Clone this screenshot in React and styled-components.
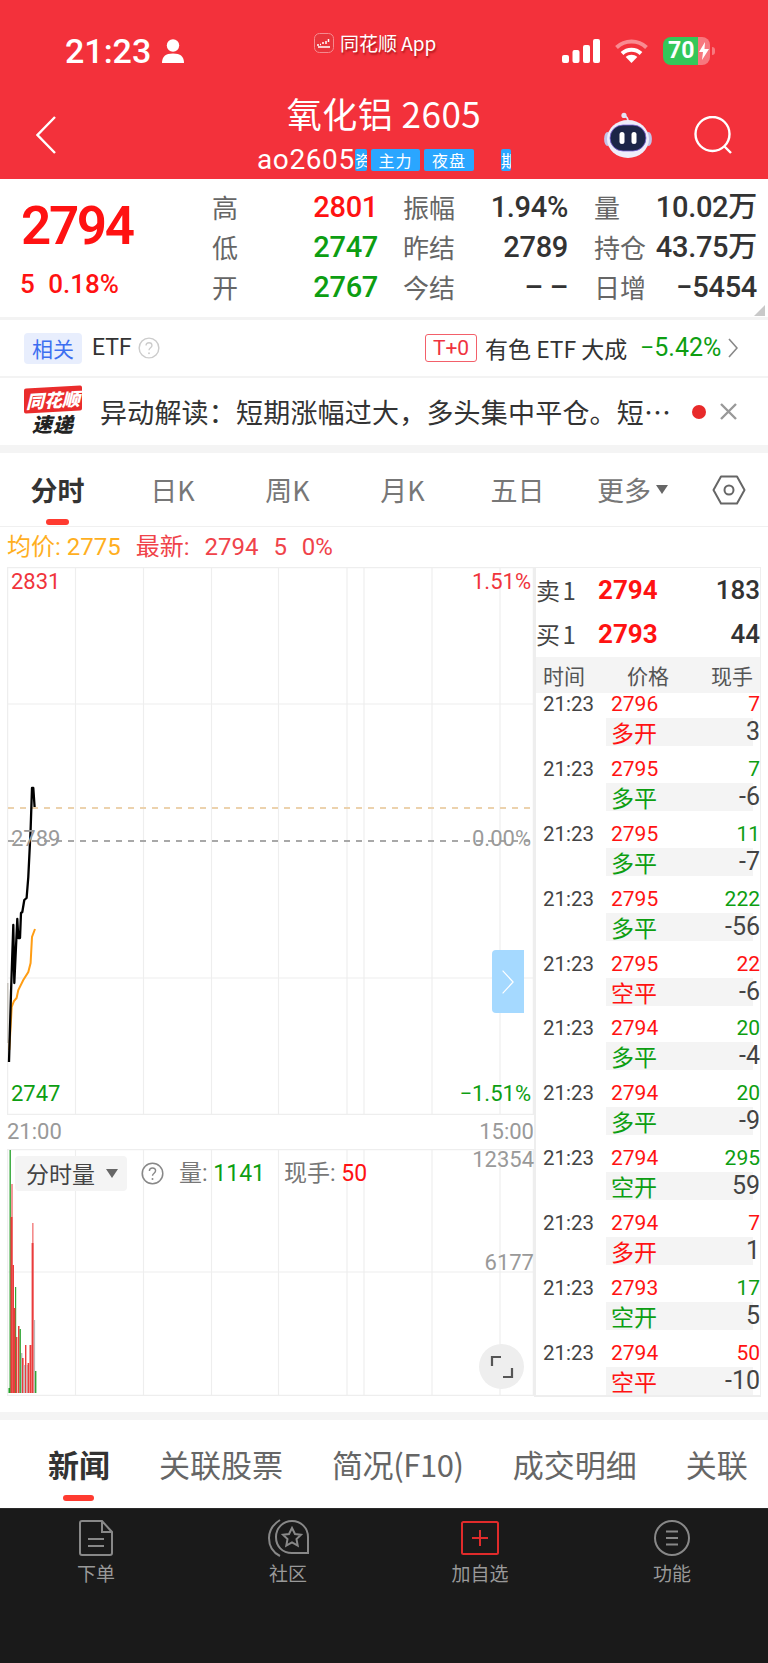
import React from "react";
import styled, { createGlobalStyle } from "styled-components";

const Global = createGlobalStyle`
  html, body { margin: 0; padding: 0; background: #fff; }
  body { font-family: Roboto, "Noto Sans CJK SC", sans-serif; color: #333; }
  #root { width: 768px; height: 1663px; overflow: hidden; }
  * { box-sizing: border-box; }
`;

const RED = "#ff1212";
const GREEN = "#0d9e12";
const palette = { red: RED, green: GREEN, dark: "#333", grey: "#666" };

const Page = styled.div`width: 768px; height: 1663px; display: flex; flex-direction: column; overflow: hidden; background: #fff;`;
const Header = styled.header`background: #f3313b; color: #fff; height: 179px; flex: none;`;
const StatusBar = styled.div`height: 90px; display: grid; grid-template-columns: 314px 248px 1fr; padding-top: 32px;`;
const StatusLeft = styled.div`display: flex; align-items: center; height: 38px; padding-left: 65px; gap: 11px; font: 500 34px/38px Roboto, sans-serif;`;
const AppLabel = styled.div`display: flex; align-items: center; gap: 6px; height: 22px; font: 400 19px/22px "Noto Sans CJK SC", sans-serif; text-shadow: 1px 2px 2px rgba(110,0,0,.55);`;
const StatusRight = styled.div`display: flex; align-items: center; height: 38px; gap: 15px;`;
const Battery = styled.div`position: relative; display: flex; width: 47px; height: 28px; margin-right: 3px; font: 700 23px/28px Roboto, sans-serif;
  &::after { content: ""; position: absolute; right: -5px; top: 10px; width: 3px; height: 8px; border-radius: 0 3px 3px 0; background: rgba(255,255,255,.35); }`;
const BatteryFill = styled.div`width: 35px; background: #34c759; padding-left: 5px; border-radius: 8px 0 0 8px;`;
const BatteryBolt = styled.div`width: 12px; display: flex; align-items: center; justify-content: center; background: rgba(255,255,255,.35); border-radius: 0 8px 8px 0;`;

const NavBar = styled.div`height: 89px; display: grid; grid-template-columns: 200px 1fr 200px; align-items: center;`;
const NavSide = styled.div`display: flex; align-items: center; justify-content: ${p => p.$end ? "flex-end" : "flex-start"}; padding: ${p => p.$end ? "0 35px 0 0" : "0 0 0 36px"}; gap: 42px;`;
const NavCenter = styled.div`display: flex; flex-direction: column; align-items: center; padding-top: 1px;`;
const Title = styled.div`font: 400 35px/38px "Noto Sans CJK SC", sans-serif; height: 38px; margin-bottom: 17px; margin-top: -6px; letter-spacing: .5px;`;
const Ticker = styled.div`display: flex; align-items: center; height: 22px;`;
const TickerCode = styled.span`font: 400 28px/22px Roboto, sans-serif; width: 98px; letter-spacing: .6px;`;
const Chip = styled.span`display: block; height: 22px; width: ${p => p.$w}px; margin-left: ${p => p.$gap || 0}px; border-radius: 2px; background: #2aa6ff; white-space: nowrap; overflow: ${p => p.$w > 20 ? "visible" : "hidden"}; text-align: ${p => p.$w > 20 ? "center" : "left"}; letter-spacing: ${p => p.$w > 20 ? 1 : 0}px; font: 400 16px/22px "Noto Sans CJK SC", sans-serif;`;

const Quote = styled.section`height: 138px; flex: none; display: flex;`;
const PriceCol = styled.div`width: 212px; padding: 15px 0 0 21px; flex: none;`;
const BigPrice = styled.div`color: ${RED}; font: 600 53px/64px Roboto, sans-serif; letter-spacing: -2.4px;`;
const Change = styled.div`color: ${RED}; font: 500 26px/30px Roboto, sans-serif; margin: 11px 0 0 -1px; word-spacing: 7px;`;
const StatGrid = styled.div`display: grid; grid-template-columns: 86px 80px 102px 88px 82px 107px; grid-auto-rows: 40px; padding-top: 8px; align-items: center;`;
const StatLabel = styled.div`color: #666; font: 400 26px/40px "Noto Sans CJK SC", sans-serif; padding-left: ${p => p.$pad || 0}px; white-space: nowrap;`;
const StatValue = styled.div`color: ${p => palette[p.$c || "dark"]}; font: 500 29px/40px Roboto, "Noto Sans CJK SC", sans-serif; text-align: right; white-space: nowrap; letter-spacing: -.3px;`;
const Corner = styled.div`position: absolute; left: 754px; top: 305px; width: 0; height: 0; border-left: 11px solid transparent; border-bottom: 11px solid #c9c9c9;`;

const EtfRow = styled.section`height: 59px; flex: none; border-top: 3px solid #f3f3f3; display: flex; align-items: center; padding-left: 24px; font: 400 23px/28px "Noto Sans CJK SC", Roboto, sans-serif; color: #333;`;
const RelBadge = styled.span`width: 58px; height: 31px; background: #e8eefd; color: #3d6ff0; border-radius: 4px; text-align: center; font: 400 21px/31px "Noto Sans CJK SC", sans-serif;`;
const EtfName = styled.span`margin: 0 6px 0 10px; font: 400 23px/28px Roboto, sans-serif;`;
const Spacer = styled.div`flex: 1;`;
const TBadge = styled.span`width: 52px; height: 28px; border: 1px solid #f3606a; border-radius: 3px; color: #ef3340; text-align: center; font: 400 21px/26px Roboto, sans-serif; margin-right: 8px;`;
const EtfTitle = styled.span`font: 400 23px/28px "Noto Sans CJK SC", Roboto, sans-serif; width: 155px; white-space: nowrap;`;
const EtfPct = styled.span`color: ${GREEN}; font: 400 25px/28px Roboto, sans-serif; width: 80px; white-space: nowrap;`;
const EtfArrow = styled.svg`margin: 0 30px 0 8px;`;

const NewsRow = styled.section`height: 69px; flex: none; border-top: 2px solid #f3f3f3; display: flex; align-items: center; padding-left: 24px;`;
const NewsLogo = styled.div`width: 58px; flex: none; display: flex; flex-direction: column; align-items: center;`;
const NewsTag = styled.div`width: 58px; height: 25px; background: #ea2c2c; border-radius: 2px; color: #fff; text-align: center; transform: skewY(-3deg); font: italic 800 18px/25px "Noto Sans CJK SC", sans-serif;`;
const NewsBrand = styled.div`color: #222; font: italic 800 20px/24px "Noto Sans CJK SC", sans-serif; letter-spacing: 1px; white-space: nowrap;`;
const NewsText = styled.div`margin-left: 18px; width: 572px; flex: none; font: 400 27px/34px "Noto Sans CJK SC", sans-serif; letter-spacing: .2px; color: #333; white-space: nowrap;`;
const NewsDot = styled.span`width: 14px; height: 14px; border-radius: 50%; background: #e82a2a; margin-left: 20px; flex: none;`;
const NewsClose = styled.svg`margin-left: 14px;`;

const GreyBand = styled.div`height: ${p => p.$h}px; margin-top: ${p => p.$top || 0}px; background: #f4f4f4; flex: none;`;
const Tabs = styled.nav`height: 74px; flex: none; display: grid; grid-template-columns: repeat(6, 115px) 1fr; border-bottom: 1px solid #f0f0f0; align-items: center; justify-items: center;`;
const PeriodTab = styled.div`position: relative; font: ${p => p.$on ? 700 : 400} 27px/36px "Noto Sans CJK SC", Roboto, sans-serif; color: ${p => p.$on ? "#333" : "#777"}; white-space: nowrap; display: flex; align-items: center; gap: 5px;
  ${p => p.$on && `&::after { content: ""; position: absolute; left: 15px; top: 47px; width: 23px; height: 6px; border-radius: 3px; background: #ff3b30; }`}`;
const Caret = styled.span`width: 0; height: 0; border-left: 6.5px solid transparent; border-right: 6.5px solid transparent; border-top: 9px solid #666;`;

const Legend = styled.div`height: 40px; flex: none; padding: 0 0 0 7px; display: flex; align-items: center; gap: 15px; font: 400 24px/40px Roboto, "Noto Sans CJK SC", sans-serif; color: #f0434a; word-spacing: 9px;`;
const LegendAvg = styled.span`color: #ffaf1f; word-spacing: 0;`;

const Market = styled.section`flex: none; display: flex; padding: 0 7px; height: 830px;`;
const ChartCol = styled.div`width: 527px; flex: none;`;
const Plot = styled.div`position: relative; height: ${p => p.$h}px;`;
const PlotSvg = styled.svg`display: block;`;
const PlotLabel = styled.span`position: absolute; font: 400 ${p => p.$s || 22}px/26px Roboto, sans-serif; color: ${p => p.$c}; white-space: nowrap; ${p => p.$right !== undefined ? `right: ${p.$right}px;` : `left: ${p.$left}px;`} top: ${p => p.$top}px;`;
const Handle = styled.div`position: absolute; left: 485px; top: 383px; width: 32px; height: 63px; background: #a5d9ff; border-radius: 4px 0 0 4px; display: flex; align-items: center; justify-content: center;`;
const TimeAxis = styled.div`height: 34px; display: flex; justify-content: space-between; align-items: center; color: #999; font: 400 22px/34px Roboto, sans-serif;`;
const VolTools = styled.div`position: absolute; left: 8px; top: 7px; display: flex; align-items: center;`;
const VolSelect = styled.div`width: 112px; height: 35px; margin-right: 14px; background: #f4f4f4; border-radius: 4px; display: flex; align-items: center; gap: 11px; padding-left: 11px; font: 400 23px/35px "Noto Sans CJK SC", sans-serif; color: #444;`;
const VolInfo = styled.span`margin-left: ${p => p.$gap}px; color: #777; font: 400 23px/35px Roboto, "Noto Sans CJK SC", sans-serif; white-space: nowrap;`;
const VolNum = styled.span`color: ${p => palette[p.$c]};`;
const ExpandBtn = styled.div`position: absolute; left: 472px; top: 195px; width: 45px; height: 45px; border-radius: 50%; background: #eee; display: flex; align-items: center; justify-content: center;`;

const SidePanel = styled.aside`width: 227px; flex: none; border: 1px solid #eee; border-bottom-width: 2px; border-left-width: 2px; height: 830px;`;
const BookRow = styled.div`height: 44px; display: grid; grid-template-columns: 62px 1fr auto; align-items: center;`;
const BookLabel = styled.span`font: 400 24px/44px "Noto Sans CJK SC", Roboto, sans-serif; word-spacing: -3px; color: #444; white-space: nowrap;`;
const BookPrice = styled.span`font: 700 26px/44px Roboto, sans-serif; color: ${RED};`;
const BookQty = styled.span`font: 500 26px/44px Roboto, sans-serif; color: #333;`;
const TradeHead = styled.div`height: 36px; margin-top: 1px; background: #f4f4f4; display: grid; grid-template-columns: 84px 84px 1fr; padding-left: 7px; font: 400 21px/36px "Noto Sans CJK SC", sans-serif; color: #555;`;
const Trade = styled.div`height: ${p => p.$last ? 53 : 64.9}px; display: grid; grid-template-columns: 70px 1fr;`;
const TradeTime = styled.span`padding-left: 7px; font: 400 20.5px/22px Roboto, sans-serif; color: #444;`;
const TradeLine = styled.div`height: 25px; display: flex; justify-content: space-between; padding-left: 5px; font: 400 21px/22px Roboto, sans-serif;`;
const TradeNum = styled.span`color: ${p => palette[p.$c]};`;
const TradeSub = styled.div`height: 28px; margin-right: 7px; background: #f4f4f4; display: flex; justify-content: space-between; padding-left: 5px;`;
const TradeKind = styled.span`color: ${p => palette[p.$c]}; font: 400 23px/28px "Noto Sans CJK SC", sans-serif;`;
const TradeDelta = styled.span`margin-right: -7px; color: #444; font: 400 25px/28px Roboto, sans-serif;`;

const NewsTabs = styled.nav`height: 88px; flex: none; display: flex; gap: 49px; padding: 25px 0 0 48px; white-space: nowrap; overflow: hidden;`;
const NewsTab = styled.div`position: relative; flex: none; font: ${p => p.$on ? 700 : 400} 31px/38px "Noto Sans CJK SC", Roboto, sans-serif; color: ${p => p.$on ? "#333" : "#666"}; letter-spacing: ${p => p.$tight ? "-.4px" : "0"};
  ${p => p.$on && `&::after { content: ""; position: absolute; left: 15px; top: 50px; width: 31px; height: 6px; border-radius: 3px; background: #ff3b30; }`}`;
const BottomBar = styled.footer`flex: 1; background: #1a1a1a; border-top: 1px solid #2a2a2a; display: grid; grid-template-columns: repeat(4, 192px); padding-top: 8px; align-content: start; justify-items: center;`;
const BarItem = styled.div`display: flex; flex-direction: column; align-items: center; height: 70px; color: #999; font: 400 19px/24px "Noto Sans CJK SC", sans-serif;`;
const BarIcon = styled.div`height: 42px; margin-bottom: 2px; display: flex; align-items: center;`;

const Chevron = ({ w = 20, h = 38, color = "#fff", sw = 2.4, dir = "left" }) => (
  <svg width={w} height={h} viewBox="0 0 20 38" fill="none" preserveAspectRatio="none">
    <path d={dir === "left" ? "M19 1 L1.5 19 L19 37" : "M1 1 L18.5 19 L1 37"} stroke={color} strokeWidth={sw} />
  </svg>
);

const Help = ({ size = 23, c = "#aaa" }) => (
  <svg width={size} height={size} viewBox="0 0 23 23" fill="none">
    <circle cx="11.5" cy="11.5" r="10.3" stroke={c} strokeWidth="1.5" />
    <path d="M8.4 9c0-1.9 1.4-3 3.1-3s3.1 1.1 3.1 2.8c0 2.3-3.1 2.5-3.1 5" stroke={c} strokeWidth="1.4" />
    <circle cx="11.5" cy="17" r="1" fill={c} />
  </svg>
);

const AppLogo = () => (
  <svg width="20" height="20" viewBox="0 0 20 20">
    <rect x=".5" y=".5" width="19" height="19" rx="5" fill="#e8343c" stroke="#f58a8f" />
    <path d="M3 12h2M6 11.5h1M9 9v2M12 8v3M14.5 6v3M4 14h12" stroke="#fff" strokeWidth="1.5" />
  </svg>
);

const Robot = () => (
  <svg width="48" height="46" viewBox="0 0 48 46">
    <path d="M24 9c0-2-1-4-3-5" stroke="#e4e2f4" strokeWidth="1.6" fill="none" />
    <circle cx="20" cy="3.4" r="2.6" fill="#e4e2f4" />
    <ellipse cx="3.5" cy="27" rx="3.4" ry="7" fill="#c3c2e8" />
    <ellipse cx="44.5" cy="27" rx="3.4" ry="7" fill="#c3c2e8" />
    <ellipse cx="24" cy="27" rx="21" ry="19" fill="#eeedfa" />
    <rect x="6" y="13" width="36" height="26" rx="13" fill="#1c2547" stroke="#7f64d8" strokeWidth=".8" />
    <rect x="15.5" y="20" width="5" height="12" rx="2.5" fill="#fff" />
    <rect x="27.5" y="20" width="5" height="12" rx="2.5" fill="#fff" />
  </svg>
);

const Search = () => (
  <svg width="39" height="38" viewBox="0 0 39 38" fill="none">
    <circle cx="18.5" cy="18" r="17" stroke="#fff" strokeWidth="2.4" />
    <path d="M30 30l7 7" stroke="#fff" strokeWidth="2.4" />
  </svg>
);

const VGRID = [75.5, 143.5, 211.5, 278.5, 347, 364, 432, 500];

const PriceSvg = () => (
  <PlotSvg width="527" height="548" viewBox="7 567 527 548">
    <rect x="7.5" y="567.5" width="526" height="547" fill="none" stroke="#eee" strokeWidth="1.5" />
    {VGRID.map(x => <line key={x} x1={x} x2={x} y1="567" y2="1115" stroke="#eee" strokeWidth="1.2" />)}
    <line x1="7" x2="534" y1="704" y2="704" stroke="#eee" strokeWidth="1.2" />
    <line x1="7" x2="534" y1="978" y2="978" stroke="#eee" strokeWidth="1.2" />
    <line x1="8" x2="534" y1="808" y2="808" stroke="#ecd2ad" strokeWidth="1.8" strokeDasharray="6 6" />
    <line x1="8" x2="534" y1="841" y2="841" stroke="#a8a8a8" strokeWidth="1.8" strokeDasharray="6 6" />
    <rect x="6.5" y="983" width="2" height="60" fill="#c9c6c0" />
    <polyline fill="none" stroke="#ff9d14" strokeWidth="2" points="9.3,1050 11.7,1007 14,1001 16.6,998 18.3,990 23.3,980 28.3,972 30.6,963 32,937 35,929" />
    <polyline fill="none" stroke="#000" strokeWidth="2.3" strokeLinejoin="round" points="9,1062 11,993 13.3,925 14.3,983 17.3,919 18.3,938 20,938 21,913 22.3,912 24.3,900 26.6,898 28.3,877 30.6,830 32,788 33.3,788 34.6,807" />
  </PlotSvg>
);

const BARS = [
  [8.5, 1.5, 1388, "#159f1c"], [11, 2, 1184, "#f49a9a"], [9.5, 1.4, 1150, "#2fa634"], [10.5, 2, 1217, "#ea3c3c"],
  [12.5, 1.5, 1265, "#ea3c3c"], [15, 1.2, 1287, "#2fa634"], [13.8, 1.6, 1308, "#ea3c3c"], [16, 1.4, 1337, "#ea3c3c"],
  [18, 1.5, 1326, "#ea3c3c"], [19.5, 1.4, 1329, "#2fa634"], [21, 1.4, 1353, "#b9b9b9"], [22, 1.6, 1358, "#ea3c3c"],
  [23.5, 1.4, 1365, "#b9b9b9"], [25, 1.4, 1345, "#ea3c3c"], [26.5, 1.3, 1365, "#b9b9b9"], [27.6, 1.6, 1363, "#ea3c3c"],
  [29.5, 2, 1345, "#ea3c3c"], [32, 1.6, 1223, "#f48c8c"], [31.6, 1.9, 1243, "#ea3c3c"], [33.8, 1.3, 1320, "#bbb"], [35, 1.4, 1371, "#2fa634"],
];

const VolumeSvg = () => (
  <PlotSvg width="527" height="247" viewBox="7 1149 527 247">
    <rect x="7.5" y="1149.5" width="526" height="246" fill="none" stroke="#eee" strokeWidth="1.5" />
    {VGRID.map(x => <line key={x} x1={x} x2={x} y1="1149" y2="1396" stroke="#eee" strokeWidth="1.2" />)}
    <line x1="7" x2="534" y1="1272" y2="1272" stroke="#eee" strokeWidth="1.2" />
    {BARS.map(([x, w, top, c], i) => <rect key={i} x={x} y={top} width={w} height={1393 - top} fill={c} />)}
  </PlotSvg>
);

const TRADES = [
  ["2796", "7", "red", "多开", "red", "3"], ["2795", "7", "green", "多平", "green", "-6"],
  ["2795", "11", "green", "多平", "green", "-7"], ["2795", "222", "green", "多平", "green", "-56"],
  ["2795", "22", "red", "空平", "red", "-6"], ["2794", "20", "green", "多平", "green", "-4"],
  ["2794", "20", "green", "多平", "green", "-9"], ["2794", "295", "green", "空开", "green", "59"],
  ["2794", "7", "red", "多开", "red", "1"], ["2793", "17", "green", "空开", "green", "5"],
  ["2794", "50", "red", "空平", "red", "-10"],
];

export default function App() {
  return (
    <Page>
      <Global />
      <Header>
        <StatusBar>
          <StatusLeft>
            <span>21:23</span>
            <svg width="22" height="24" viewBox="0 0 22 24" fill="#fff">
              <circle cx="11" cy="6.5" r="6.2" />
              <path d="M0 24c0-6.5 3.5-9.5 11-9.5S22 17.5 22 24z" />
            </svg>
          </StatusLeft>
          <AppLabel><AppLogo /><span>同花顺 App</span></AppLabel>
          <StatusRight>
            <svg width="38" height="24" viewBox="0 0 38 24" fill="#fff">
              <rect x="0" y="16" width="7" height="8" rx="2" />
              <rect x="10.5" y="11" width="7" height="13" rx="2" />
              <rect x="21" y="6" width="7" height="18" rx="2" />
              <rect x="31" y="0" width="7" height="24" rx="2" />
            </svg>
            <svg width="33" height="24" viewBox="0 0 33 24" fill="none">
              <path d="M1.5 8.5C10 .5 23 .5 31.5 8.5" stroke="#f98b91" strokeWidth="4" />
              <path d="M7 14.5c5.5-5 13.5-5 19 0" stroke="#fff" strokeWidth="4" />
              <path d="M16.5 24l-5.8-6c3.3-3 8.3-3 11.6 0z" fill="#fff" />
            </svg>
            <Battery>
              <BatteryFill>70</BatteryFill>
              <BatteryBolt>
                <svg width="10" height="18" viewBox="0 0 10 18" fill="#fff"><path d="M6 0L0 10h4l-1 8 7-11H5.5z" /></svg>
              </BatteryBolt>
            </Battery>
          </StatusRight>
        </StatusBar>
        <NavBar>
          <NavSide><Chevron /></NavSide>
          <NavCenter>
            <Title>氧化铝 2605</Title>
            <Ticker>
              <TickerCode>ao2605</TickerCode>
              <Chip $w={12}> 资</Chip>
              <Chip $w={49} $gap={4}>主力</Chip>
              <Chip $w={50} $gap={4}>夜盘</Chip>
              <Chip $w={10} $gap={27}>期</Chip>
            </Ticker>
          </NavCenter>
          <NavSide $end><Robot /><Search /></NavSide>
        </NavBar>
      </Header>

      <Quote>
        <PriceCol>
          <BigPrice>2794</BigPrice>
          <Change>5 0.18%</Change>
        </PriceCol>
        <StatGrid>
          <StatLabel>高</StatLabel><StatValue $c="red">2801</StatValue>
          <StatLabel $pad={25}>振幅</StatLabel><StatValue>1.94%</StatValue>
          <StatLabel $pad={26}>量</StatLabel><StatValue>10.02万</StatValue>
          <StatLabel>低</StatLabel><StatValue $c="green">2747</StatValue>
          <StatLabel $pad={25}>昨结</StatLabel><StatValue>2789</StatValue>
          <StatLabel $pad={26}>持仓</StatLabel><StatValue>43.75万</StatValue>
          <StatLabel>开</StatLabel><StatValue $c="green">2767</StatValue>
          <StatLabel $pad={25}>今结</StatLabel><StatValue>– –</StatValue>
          <StatLabel $pad={26}>日增</StatLabel><StatValue>−5454</StatValue>
        </StatGrid>
        <Corner />
      </Quote>

      <EtfRow>
        <RelBadge>相关</RelBadge>
        <EtfName>ETF</EtfName>
        <Help size={22} c="#ccc" />
        <Spacer />
        <TBadge>T+0</TBadge>
        <EtfTitle>有色 ETF 大成</EtfTitle>
        <EtfPct>−5.42%</EtfPct>
        <EtfArrow width="10" height="20" viewBox="0 0 10 20" fill="none">
          <path d="M1 1l8 9-8 9" stroke="#888" strokeWidth="1.6" />
        </EtfArrow>
      </EtfRow>

      <NewsRow>
        <NewsLogo>
          <NewsTag>同花顺</NewsTag>
          <NewsBrand>速递</NewsBrand>
        </NewsLogo>
        <NewsText>异动解读：短期涨幅过大，多头集中平仓。短…</NewsText>
        <NewsDot />
        <NewsClose width="17" height="17" viewBox="0 0 17 17">
          <path d="M1 1l15 15M16 1L1 16" stroke="#999" strokeWidth="2.4" />
        </NewsClose>
      </NewsRow>

      <GreyBand $h={8} />

      <Tabs>
        <PeriodTab $on>分时</PeriodTab>
        <PeriodTab>日K</PeriodTab>
        <PeriodTab>周K</PeriodTab>
        <PeriodTab>月K</PeriodTab>
        <PeriodTab>五日</PeriodTab>
        <PeriodTab>更多<Caret /></PeriodTab>
        <svg width="34" height="30" viewBox="0 0 34 30" fill="none">
          <path d="M9 1.5h16L32.5 15 25 28.5H9L1.5 15z" stroke="#666" strokeWidth="2" strokeLinejoin="round" />
          <circle cx="17" cy="15" r="4.5" stroke="#666" strokeWidth="2" />
        </svg>
      </Tabs>

      <Legend>
        <LegendAvg>均价: 2775</LegendAvg>
        <span>最新: 2794 5 0%</span>
      </Legend>

      <Market>
        <ChartCol>
          <Plot $h={548}>
            <PriceSvg />
            <PlotLabel $left={4} $top={2} $c="#f0343c">2831</PlotLabel>
            <PlotLabel $right={3} $top={2} $c="#f0343c">1.51%</PlotLabel>
            <PlotLabel $left={4} $top={259} $c="#9a9a9a">2789</PlotLabel>
            <PlotLabel $right={3} $top={259} $c="#9a9a9a">0.00%</PlotLabel>
            <PlotLabel $left={4} $top={514} $c={GREEN}>2747</PlotLabel>
            <PlotLabel $right={3} $top={514} $c={GREEN}>−1.51%</PlotLabel>
            <Handle><Chevron w={12} h={24} sw={2} dir="right" /></Handle>
          </Plot>
          <TimeAxis><span>21:00</span><span>15:00</span></TimeAxis>
          <Plot $h={247}>
            <VolumeSvg />
            <PlotLabel $right={0} $top={-2} $c="#999" $s={22}>12354</PlotLabel>
            <PlotLabel $right={0} $top={101} $c="#999" $s={22}>6177</PlotLabel>
            <VolTools>
              <VolSelect>分时量<Caret /></VolSelect>
              <Help size={23} c="#888" />
              <VolInfo $gap={15}>量: <VolNum $c="green">1141</VolNum></VolInfo>
              <VolInfo $gap={19}>现手: <VolNum $c="red">50</VolNum></VolInfo>
            </VolTools>
            <ExpandBtn>
              <svg width="24" height="24" viewBox="0 0 24 24" fill="none">
                <path d="M11 2H2v9M13 22h9v-9" stroke="#555" strokeWidth="2.2" />
              </svg>
            </ExpandBtn>
          </Plot>
        </ChartCol>
        <SidePanel>
          <BookRow><BookLabel>卖 1</BookLabel><BookPrice>2794</BookPrice><BookQty>183</BookQty></BookRow>
          <BookRow><BookLabel>买 1</BookLabel><BookPrice>2793</BookPrice><BookQty>44</BookQty></BookRow>
          <TradeHead><span>时间</span><span>价格</span><span>现手</span></TradeHead>
          {TRADES.map(([price, qty, qc, kind, kc, delta], i) => (
            <Trade key={i} $last={i === TRADES.length - 1}>
              <TradeTime>21:23</TradeTime>
              <div>
                <TradeLine><TradeNum $c="red">{price}</TradeNum><TradeNum $c={qc}>{qty}</TradeNum></TradeLine>
                <TradeSub><TradeKind $c={kc}>{kind}</TradeKind><TradeDelta>{delta}</TradeDelta></TradeSub>
              </div>
            </Trade>
          ))}
        </SidePanel>
      </Market>

      <GreyBand $h={8} $top={15} />
      <NewsTabs>
        <NewsTab $on>新闻</NewsTab>
        <NewsTab>关联股票</NewsTab>
        <NewsTab $tight>简况(F10)</NewsTab>
        <NewsTab>成交明细</NewsTab>
        <NewsTab>关联</NewsTab>
      </NewsTabs>

      <BottomBar>
        <BarItem>
          <BarIcon>
            <svg width="34" height="36" viewBox="0 0 34 36" fill="none" stroke="#888" strokeWidth="2">
              <path d="M3 1h20l10 11v21a2 2 0 0 1-2 2H3a2 2 0 0 1-2-2V3a2 2 0 0 1 2-2zM23 1v11h10M9 19h16M9 26h16" />
            </svg>
          </BarIcon>
          下单
        </BarItem>
        <BarItem>
          <BarIcon>
            <svg width="41" height="38" viewBox="0 0 41 38" fill="none" stroke="#888" strokeWidth="2">
              <path d="M12 1C4 6 1 12 1 19s3 14 11 18" />
              <path d="M24 2c9 0 16 7 16 16v16H24C14 34 8 27 8 18S15 2 24 2z" />
              <path d="M24 9l3 6 6 .8-4.5 4.3 1.2 6.4L24 23.3l-5.7 3.2 1.2-6.4L15 15.8l6-.8z" />
            </svg>
          </BarIcon>
          社区
        </BarItem>
        <BarItem>
          <BarIcon>
            <svg width="38" height="34" viewBox="0 0 38 34" fill="none" stroke="#e02b2b" strokeWidth="2">
              <rect x="1" y="1" width="36" height="32" rx="1.5" />
              <path d="M11 17h16M19 9v16" />
            </svg>
          </BarIcon>
          加自选
        </BarItem>
        <BarItem>
          <BarIcon>
            <svg width="36" height="36" viewBox="0 0 36 36" fill="none" stroke="#888" strokeWidth="2">
              <circle cx="18" cy="18" r="17" />
              <path d="M12 11.5h12M12 18h12M12 24.5h12" />
            </svg>
          </BarIcon>
          功能
        </BarItem>
      </BottomBar>
    </Page>
  );
}
